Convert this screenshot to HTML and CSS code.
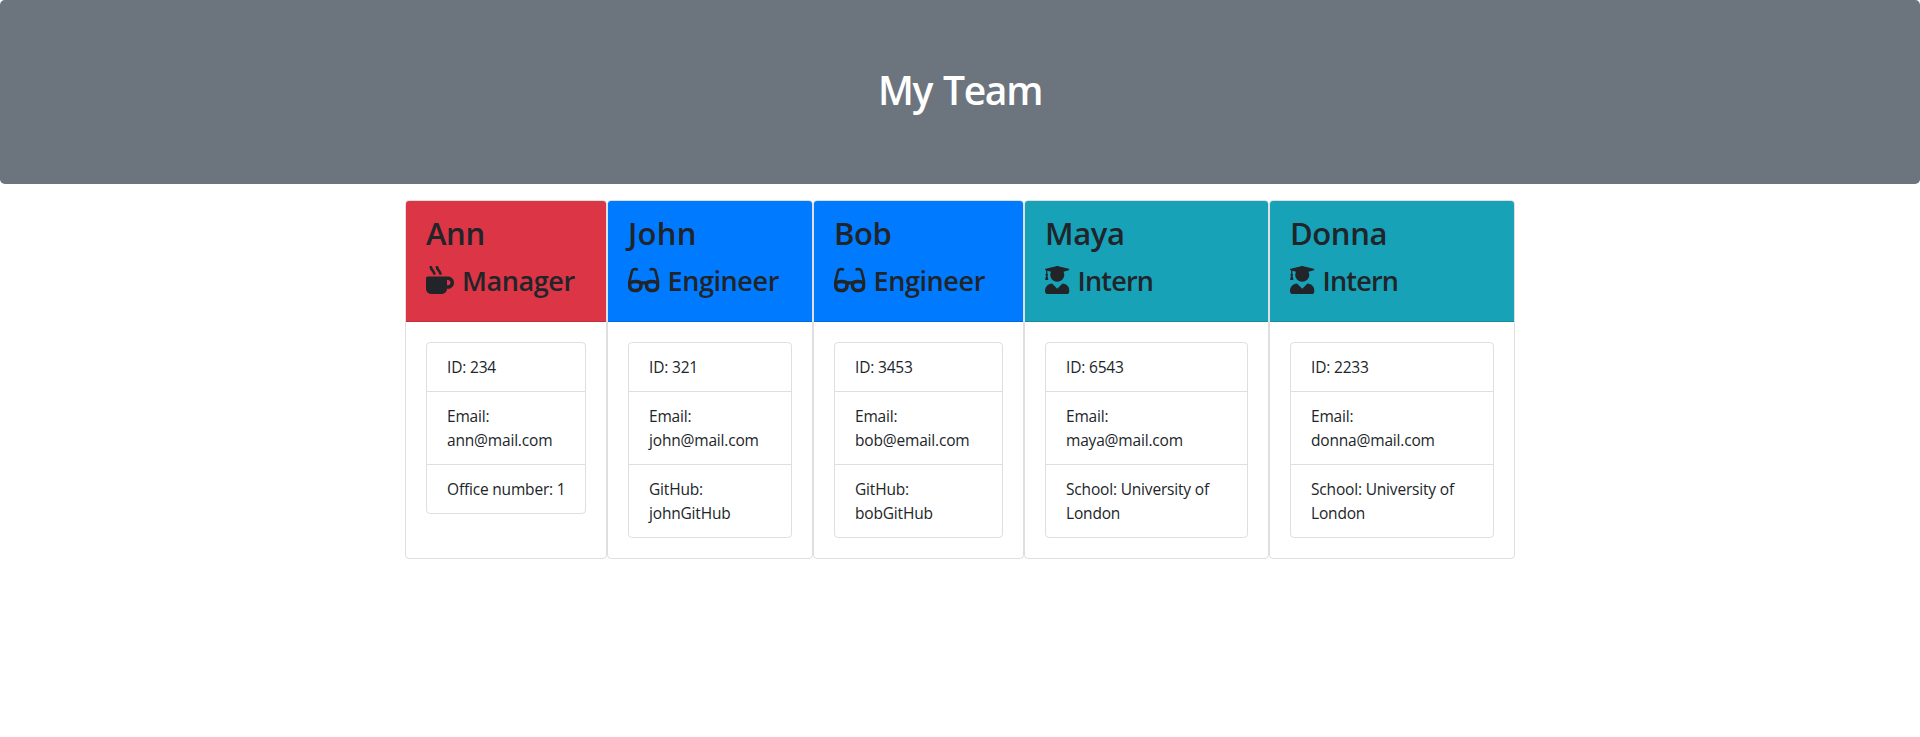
FILE: index.html
```html
<!DOCTYPE html>
<html lang="en">
<head>
<meta charset="utf-8">
<title>My Team</title>
<link rel="stylesheet" href="styles.css">
</head>
<body>
<svg class="sprite" aria-hidden="true">
  <symbol id="mug" viewBox="0 0 512 512"><path d="M127.1 146.5c1.3 7.7 8 13.5 16 13.5h16.5c9.8 0 17.6-8.5 16.3-18-3.8-28.2-16.4-54.2-36.6-74.7-14.4-14.7-23.6-33.3-26.4-53.5C111.8 5.9 105 0 96.8 0H80.4C70.6 0 63 8.5 64.1 18c3.9 31.9 18 61.3 40.6 84.4 12 12.2 19.7 27.5 22.4 44.1zm112 0c1.3 7.7 8 13.5 16 13.5h16.5c9.8 0 17.6-8.5 16.3-18-3.8-28.2-16.4-54.2-36.6-74.7-14.4-14.7-23.6-33.3-26.4-53.5C223.8 5.9 217 0 208.8 0h-16.4c-9.8 0-17.5 8.5-16.3 18 3.9 31.9 18 61.3 40.6 84.4 12 12.2 19.7 27.5 22.4 44.1zM400 192H32c-17.7 0-32 14.3-32 32v192c0 53 43 96 96 96h192c53 0 96-43 96-96h16c61.8 0 112-50.2 112-112s-50.2-112-112-112zm0 160h-16v-96h16c26.5 0 48 21.5 48 48s-21.5 48-48 48z"/></symbol>
  <symbol id="glasses" viewBox="0 0 576 512"><path d="M574.1 280.37L528.75 98.66c-5.91-23.7-21.59-44.05-43-55.81-21.44-11.73-46.97-14.11-70.19-6.33l-15.25 5.08c-8.39 2.79-12.92 11.86-10.12 20.24l5.06 15.18c2.79 8.38 11.85 12.91 20.23 10.12l13.18-4.39c10.87-3.62 23-3.57 33.16 1.73 10.29 5.37 17.57 14.56 20.37 25.82l38.46 153.82c-22.19-6.81-49.79-12.46-81.2-12.46-34.77 0-73.98 7.02-114.85 26.74h-73.18c-40.87-19.74-80.08-26.75-114.86-26.75-31.42 0-59.02 5.65-81.21 12.46l38.46-153.83c2.79-11.25 10.09-20.45 20.38-25.81 10.16-5.3 22.28-5.35 33.15-1.73l13.17 4.39c8.38 2.79 17.44-1.74 20.23-10.12l5.06-15.18c2.8-8.38-1.73-17.45-10.12-20.24l-15.25-5.08c-23.22-7.78-48.75-5.41-70.19 6.33-21.41 11.77-37.09 32.11-43 55.8L1.9 280.37A64.218 64.218 0 0 0 0 295.86v70.25C0 429.01 51.58 480 115.2 480h37.12c60.28 0 110.37-45.94 114.88-105.37l2.93-38.63h35.75l2.93 38.63C313.31 434.06 363.4 480 423.68 480h37.12c63.62 0 115.2-50.99 115.2-113.88v-70.25c0-5.23-.64-10.43-1.9-15.5zm-370.72 89.42c-1.97 25.91-24.4 46.21-51.06 46.21H115.2C86.97 416 64 393.62 64 366.11v-37.54c18.12-6.49 43.42-12.92 72.58-12.92 23.86 0 47.26 4.33 69.93 12.92l-3.13 41.22zM512 366.12c0 27.51-22.97 49.88-51.2 49.88h-37.12c-26.67 0-49.1-20.3-51.06-46.21l-3.13-41.22c22.67-8.59 46.08-12.92 69.95-12.92 29.12 0 54.43 6.44 72.55 12.93v37.54z"/></symbol>
  <symbol id="graduate" viewBox="0 0 448 512"><path d="M319.4 320.6L224 416l-95.4-95.4C57.1 323.7 0 382.2 0 454.4v9.6c0 26.5 21.5 48 48 48h352c26.5 0 48-21.5 48-48v-9.6c0-72.2-57.1-130.7-128.6-133.8zM13.6 79.8l6.4 1.5v58.4c-7 4.2-12 11.5-12 20.3 0 8.4 4.6 15.4 11.1 19.7L3.5 242c-1.7 6.9 2.1 14 7.6 14h41.8c5.5 0 9.3-7.1 7.6-14l-15.6-62.3C51.4 175.4 56 168.4 56 160c0-8.8-5-16.1-12-20.3V87.1l66 15.9c-8.6 17.2-14 36.4-14 57 0 70.7 57.3 128 128 128s128-57.3 128-128c0-20.6-5.3-39.8-14-57l96.3-23.2c18.2-4.4 18.2-27.1 0-31.5l-190.4-46c-13-3.1-26.7-3.1-39.7 0L13.6 48.2c-18.1 4.4-18.1 27.2 0 31.6z"/></symbol>
</svg>
<header class="jumbotron"><h1>My Team</h1></header>
<main class="team">
  <section class="card">
    <div class="card-header manager">
      <h2>Ann</h2>
      <h3><svg class="icon mug"><use href="#mug"/></svg><span>Manager</span></h3>
    </div>
    <div class="card-body"><ul class="list">
      <li>ID: 234</li>
      <li>Email:<br>ann@mail.com</li>
      <li>Office number: 1</li>
    </ul></div>
  </section>
  <section class="card">
    <div class="card-header engineer">
      <h2 class="wide">John</h2>
      <h3><svg class="icon glasses"><use href="#glasses"/></svg><span>Engineer</span></h3>
    </div>
    <div class="card-body"><ul class="list">
      <li>ID: 321</li>
      <li>Email:<br>john@mail.com</li>
      <li>GitHub:<br>johnGitHub</li>
    </ul></div>
  </section>
  <section class="card">
    <div class="card-header engineer">
      <h2>Bob</h2>
      <h3><svg class="icon glasses"><use href="#glasses"/></svg><span>Engineer</span></h3>
    </div>
    <div class="card-body"><ul class="list">
      <li>ID: 3453</li>
      <li>Email:<br>bob@email.com</li>
      <li>GitHub:<br>bobGitHub</li>
    </ul></div>
  </section>
  <section class="card">
    <div class="card-header intern">
      <h2>Maya</h2>
      <h3><svg class="icon graduate"><use href="#graduate"/></svg><span>Intern</span></h3>
    </div>
    <div class="card-body"><ul class="list">
      <li>ID: 6543</li>
      <li>Email:<br>maya@mail.com</li>
      <li>School: University of<br>London</li>
    </ul></div>
  </section>
  <section class="card">
    <div class="card-header intern">
      <h2>Donna</h2>
      <h3><svg class="icon graduate"><use href="#graduate"/></svg><span>Intern</span></h3>
    </div>
    <div class="card-body"><ul class="list">
      <li>ID: 2233</li>
      <li>Email:<br>donna@mail.com</li>
      <li>School: University of<br>London</li>
    </ul></div>
  </section>
</main>
</body>
</html>
```
FILE: styles.css
```css
*, *::before, *::after { box-sizing: border-box; }
body {
  margin: 0;
  background: #fff;
  color: #212529;
  font-family: "Segoe UI", "Open Sans", "Noto Sans", sans-serif;
  font-size: 15.5px;
  line-height: 24px;
  letter-spacing: -0.18px;
}
.sprite { display: none; }
h1, h2, h3 { margin: 0; font-weight: 600; white-space: nowrap; }
.jumbotron {
  height: 184px;
  margin-bottom: 16px;
  padding: 66px 32px 62px;
  border-radius: 4.8px;
  background: #6c757d;
  color: #fff;
  text-align: center;
}
.jumbotron h1 { font-size: 39px; line-height: 48px; letter-spacing: -1.3px; word-spacing: 2px; }
.team {
  display: grid;
  grid-template-columns: 202px 206px 211px 245px 246px;
  width: 1110px;
  margin: 0 auto;
}
.card {
  height: 359px;
  border: 1px solid rgba(0, 0, 0, .125);
  border-radius: 4px;
}
.card-header {
  height: 121px;
  padding: 13px 20px 12px;
  border-bottom: 1px solid rgba(0, 0, 0, .125);
  border-radius: 3px 3px 0 0;
}
.manager { background: #dc3545; }
.engineer { background: #007bff; }
.intern { background: #17a2b8; }
.card-header h2 { margin-bottom: 12px; font-size: 31px; line-height: 38px; letter-spacing: -0.4px; }
.card-header h2.wide { letter-spacing: 0.3px; }
.card-header h3 { display: flex; gap: 8px; font-size: 27px; line-height: 34px; letter-spacing: -0.4px; }
.intern h3 { letter-spacing: -0.8px; }
.icon { flex: none; height: 28px; margin-top: 2px; fill: currentColor; }
.mug { width: 28px; }
.glasses { width: 31.5px; }
.graduate { width: 24.5px; }
.card-body { padding: 20px; }
.list {
  margin: 0;
  padding: 0;
  list-style: none;
  border: 1px solid rgba(0, 0, 0, .125);
  border-radius: 4px;
}
.list li { padding: 12px 20px; white-space: nowrap; }
.list li + li { border-top: 1px solid rgba(0, 0, 0, .125); }
```
